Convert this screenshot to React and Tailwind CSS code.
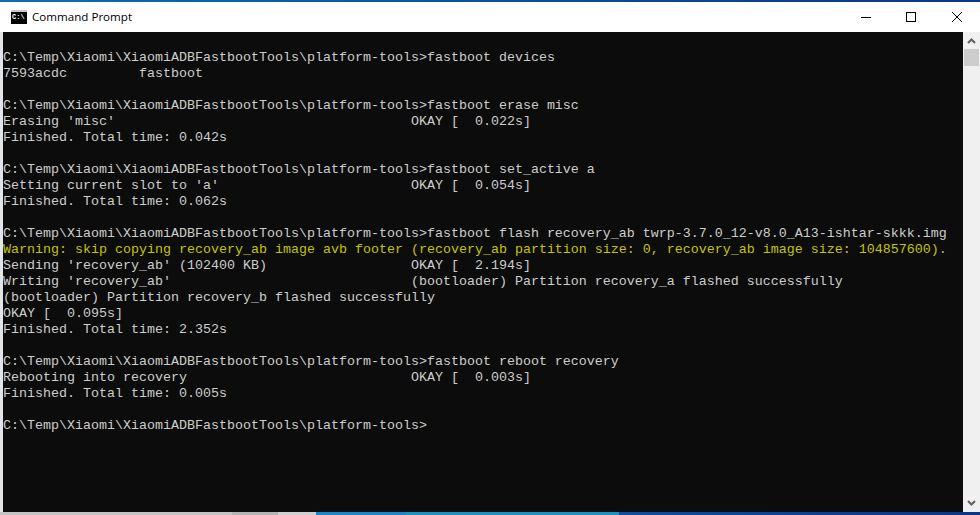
const LINES = [
  { text: '' },
  { text: 'C:\\Temp\\Xiaomi\\XiaomiADBFastbootTools\\platform-tools>fastboot devices' },
  { text: '7593acdc         fastboot' },
  { text: '' },
  { text: 'C:\\Temp\\Xiaomi\\XiaomiADBFastbootTools\\platform-tools>fastboot erase misc' },
  { text: "Erasing 'misc'                                     OKAY [  0.022s]" },
  { text: 'Finished. Total time: 0.042s' },
  { text: '' },
  { text: 'C:\\Temp\\Xiaomi\\XiaomiADBFastbootTools\\platform-tools>fastboot set_active a' },
  { text: "Setting current slot to 'a'                        OKAY [  0.054s]" },
  { text: 'Finished. Total time: 0.062s' },
  { text: '' },
  { text: 'C:\\Temp\\Xiaomi\\XiaomiADBFastbootTools\\platform-tools>fastboot flash recovery_ab twrp-3.7.0_12-v8.0_A13-ishtar-skkk.img' },
  { text: 'Warning: skip copying recovery_ab image avb footer (recovery_ab partition size: 0, recovery_ab image size: 104857600).', warn: true },
  { text: "Sending 'recovery_ab' (102400 KB)                  OKAY [  2.194s]" },
  { text: "Writing 'recovery_ab'                              (bootloader) Partition recovery_a flashed successfully" },
  { text: '(bootloader) Partition recovery_b flashed successfully' },
  { text: 'OKAY [  0.095s]' },
  { text: 'Finished. Total time: 2.352s' },
  { text: '' },
  { text: 'C:\\Temp\\Xiaomi\\XiaomiADBFastbootTools\\platform-tools>fastboot reboot recovery' },
  { text: 'Rebooting into recovery                            OKAY [  0.003s]' },
  { text: 'Finished. Total time: 0.005s' },
  { text: '' },
  { text: 'C:\\Temp\\Xiaomi\\XiaomiADBFastbootTools\\platform-tools>' },
];

function CmdIcon() {
  return (
    <div className="w-4 h-[14px] bg-black border-t-2 border-[#c8c8c8] font-['Liberation_Mono',monospace] text-[7px] leading-[10px] text-white font-bold pl-px overflow-hidden">
      C:\
    </div>
  );
}

function WindowButtons() {
  return (
    <div className="flex h-full text-black">
      <div className="w-[44px] flex items-center justify-center">
        <svg width="10" height="10" viewBox="0 0 10 10"><path d="M0 5.5h10" stroke="currentColor" /></svg>
      </div>
      <div className="w-[46px] flex items-center justify-center">
        <svg width="10" height="10" viewBox="0 0 10 10"><rect x=".5" y=".5" width="9" height="9" fill="none" stroke="currentColor" /></svg>
      </div>
      <div className="w-[46px] flex items-center justify-center">
        <svg width="10" height="10" viewBox="0 0 10 10"><path d="M0 0l10 10M10 0L0 10" stroke="currentColor" /></svg>
      </div>
    </div>
  );
}

export default function App() {
  return (
    <div className="w-[980px] h-[515px] flex flex-col overflow-hidden bg-white">
      <div className="h-[2px] bg-gradient-to-r from-[#0a6fb4] to-[#0c3488]" />
      <div className="h-[30px] flex items-center justify-between pl-[11px]">
        <div className="flex items-center gap-[5px]">
          <CmdIcon />
          <span className="font-['Open_Sans',sans-serif] text-[11.6px] text-black">Command Prompt</span>
        </div>
        <WindowButtons />
      </div>
      <div className="flex-1 flex min-h-0 bg-[#e4e4e4] pl-[3px]">
        <div className="flex-1 bg-[#0c0c0c] overflow-hidden pt-[2px] font-['Liberation_Mono',monospace] text-[13.33px] leading-[16px] text-[#cccccc] whitespace-pre">
          {LINES.map((line, i) => (
            <div key={i} className={line.warn ? 'h-4 text-[#c4c400]' : 'h-4'}>{line.text}</div>
          ))}
        </div>
        <div className="w-[17px] bg-[#f0f0f0] flex flex-col items-center">
          <svg className="mt-[6px]" width="9" height="6" viewBox="0 0 9 6"><path d="M1 5l3.5-3.5L8 5" fill="none" stroke="#606060" strokeWidth="2" /></svg>
          <div className="mt-[5px] w-[15px] h-[17px] bg-[#cdcdcd]" />
          <div className="flex-1" />
          <svg className="mb-[6px]" width="9" height="6" viewBox="0 0 9 6"><path d="M1 1l3.5 3.5L8 1" fill="none" stroke="#606060" strokeWidth="2" /></svg>
        </div>
      </div>
      {/* taskbar bleed under the window */}
      <div className="h-[3px] flex">
        <div className="w-[232px] bg-[#c4c4c4]" />
        <div className="w-[46px] bg-[#b4b4b4]" />
        <div className="w-[38px] bg-[#d0d0d0]" />
        <div className="w-[90px] bg-[#1c86c8]" />
        <div className="w-[213px] bg-[#1a92c4]" />
        <div className="flex-1 bg-gradient-to-r from-[#0c4ea0] to-[#0c3488]" />
      </div>
    </div>
  );
}
